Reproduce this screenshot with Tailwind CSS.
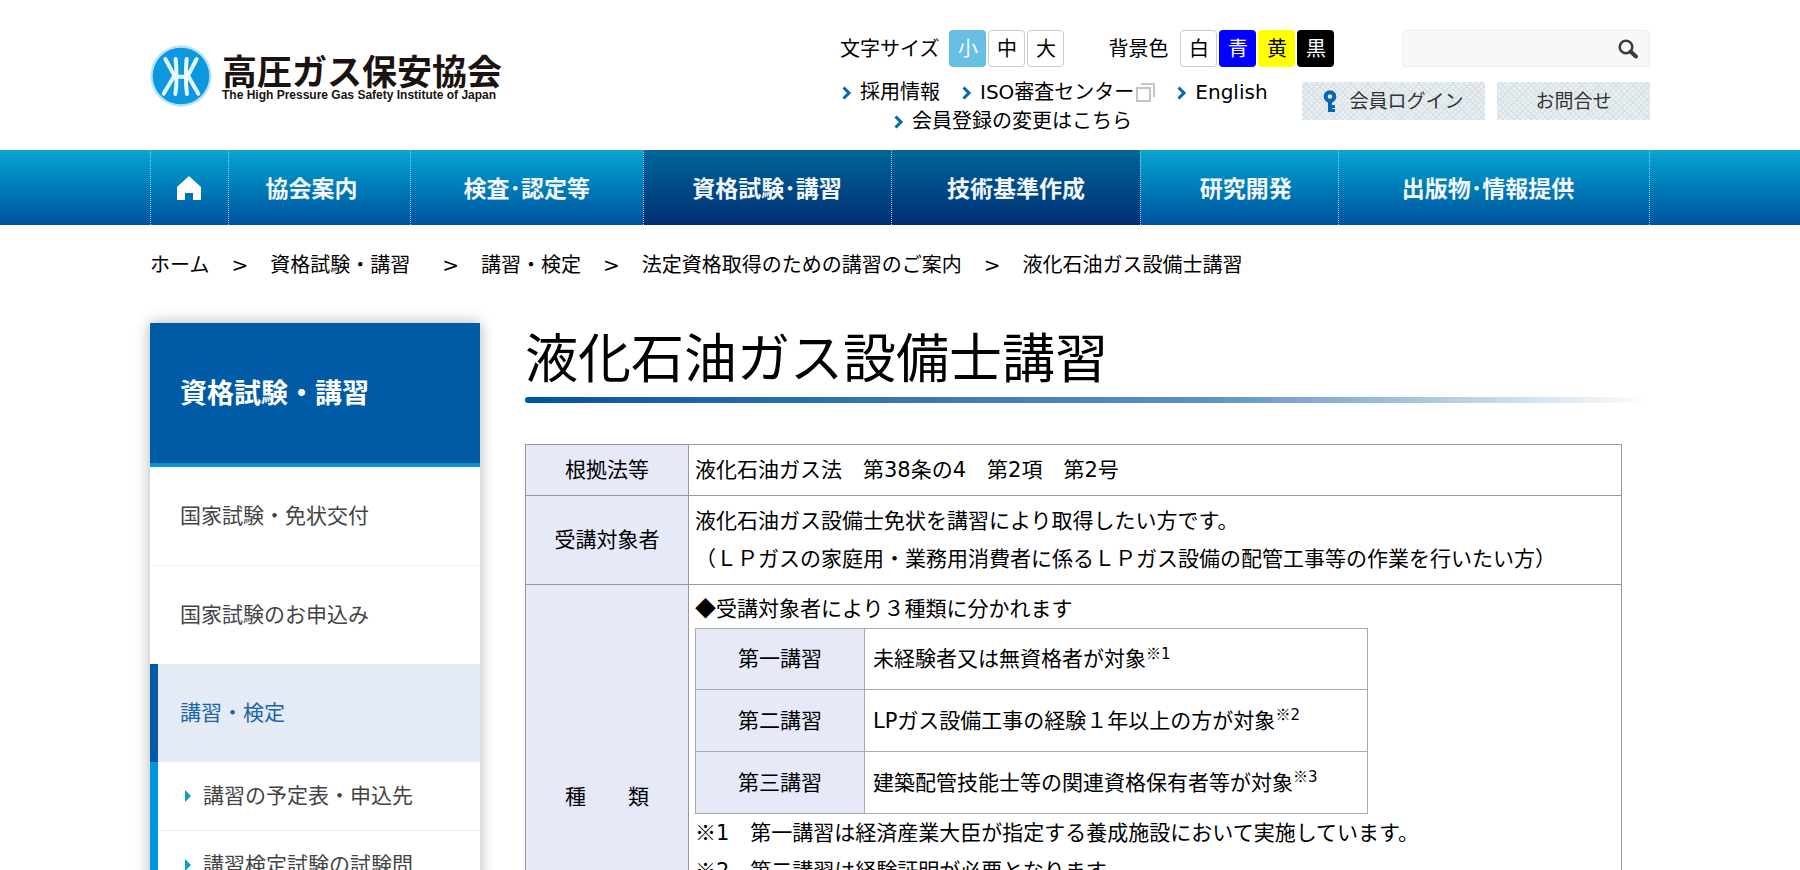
<!DOCTYPE html>
<html lang="ja">
<head>
<meta charset="utf-8">
<meta name="viewport" content="width=device-width, initial-scale=1">
<title>液化石油ガス設備士講習 | 高圧ガス保安協会</title>
<script src="https://cdn.jsdelivr.net/npm/@tailwindcss/browser@4"></script>
</head>
<body class="bg-white text-black font-[Verdana,'DejaVu_Sans','Noto_Sans_CJK_JP',sans-serif] overflow-x-hidden">

<svg class="hidden" aria-hidden="true">
  <symbol id="chevron" viewBox="0 0 10 14"><path d="M1.5 1.5 7 7l-5.500 5.500" fill="none" stroke="#0068ad" stroke-width="3"/></symbol>
  <symbol id="tri" viewBox="0 0 6 12"><path d="M0 0 6 6 0 12z" fill="#0a9fc4"/></symbol>
</svg>

<header class="mx-auto flex max-w-[1500px] min-h-[150px] items-start justify-between pt-[30px]">
  <a href="#" class="mt-[15px] flex items-center gap-2.5">
    <svg class="size-[62px]" viewBox="0 0 186 186" role="img" aria-label="KHK">
      <circle cx="93" cy="93" r="92" fill="#b9e2f6"/>
      <circle cx="93" cy="93" r="85" fill="#0c98e0"/>
      <g fill="none" stroke="#e8f8ff" stroke-width="12" stroke-linecap="round" stroke-linejoin="round">
        <path d="M46 42 73 92 41 146"/>
        <path d="M77 42 79 68V120L76 147"/>
        <path d="M110 42 108 68V120L111 147"/>
        <path d="M140 42 114 92 145 146"/>
        <path d="M73 95H114"/>
      </g>
    </svg>
    <span class="block text-[#1a1311]">
      <span class="block text-[35px] leading-[37px] font-bold font-['Noto_Sans_CJK_JP',sans-serif]">高圧ガス保安協会</span>
      <span class="block text-[12px] leading-[14px] font-bold font-['Liberation_Sans',sans-serif]">The High Pressure Gas Safety Institute of Japan</span>
    </span>
  </a>

  <div class="w-[814px]">
    <div class="flex h-[37px] items-center pl-1 text-[20px]">
      <span>文字サイズ</span>
      <div class="ml-2.5 flex gap-0.5">
        <button class="size-[37px] rounded bg-[#68bfe6] text-white">小</button>
        <button class="size-[37px] rounded border border-[#ccc] bg-white">中</button>
        <button class="size-[37px] rounded border border-[#ccc] bg-white">大</button>
      </div>
      <span class="ml-11">背景色</span>
      <div class="ml-3 flex gap-0.5">
        <button class="size-[37px] rounded border border-[#ccc] bg-white">白</button>
        <button class="size-[37px] rounded bg-[#0000ff] text-white">青</button>
        <button class="size-[37px] rounded bg-[#ffff00]">黄</button>
        <button class="size-[37px] rounded bg-black text-white">黒</button>
      </div>
      <form class="ml-auto flex h-[37px] w-[248px] items-center rounded-sm border border-[#ececec] bg-[#f8f8f8]">
        <input type="search" aria-label="サイト内検索" class="min-w-0 flex-1 bg-transparent px-2 outline-none">
        <button type="button" aria-label="検索" class="mr-[11px]">
          <svg class="size-5" viewBox="0 0 20 20" fill="none" stroke="#3c3c3c"><circle cx="8" cy="8" r="6.300" stroke-width="2.500"/><path d="m12.500 12.500 5.500 5" stroke-width="4" stroke-linecap="round"/></svg>
        </button>
      </form>
    </div>
    <div class="mt-[11px] flex items-start justify-between">
      <ul class="flex w-[450px] flex-wrap pl-1.5 text-[20px] leading-[29px]">
        <li class="mr-[22px]"><a href="#" class="flex items-center gap-2"><svg class="h-3.5 w-2.5"><use href="#chevron"/></svg>採用情報</a></li>
        <li class="mr-[22px]"><a href="#" class="flex items-center gap-2"><svg class="h-3.5 w-2.5"><use href="#chevron"/></svg><span class="flex items-center gap-0.5">ISO審査センター<svg class="size-[19px]" viewBox="0 0 19 19" fill="none" stroke="#c4c4c4" stroke-width="2"><path d="M5 1H18V14M1 5H14V18H1z"/></svg></span></a></li>
        <li><a href="#" class="flex items-center gap-2"><svg class="h-3.5 w-2.5"><use href="#chevron"/></svg>English</a></li>
        <li class="w-full pl-[52px]"><a href="#" class="flex items-center gap-2"><svg class="h-3.5 w-2.5"><use href="#chevron"/></svg>会員登録の変更はこちら</a></li>
      </ul>
      <div class="mt-1 flex w-[348px] gap-3 text-[19px] text-[#333]">
        <a href="#" class="flex h-[38px] w-[183px] items-center justify-center gap-3 bg-[#e9eef2] bg-[repeating-linear-gradient(45deg,#d6e1e5_0_1px,transparent_1px_4px),repeating-linear-gradient(-45deg,#d6e1e5_0_1px,transparent_1px_4px)]">
          <svg class="h-[22px] w-3.5" viewBox="0 0 14 22"><circle cx="7" cy="6.500" r="4.300" fill="none" stroke="#0a66b0" stroke-width="4"/><path d="M5 10H9V15H12V18H9.500V19H12V22H5z" fill="#0a66b0"/></svg>会員ログイン</a>
        <a href="#" class="flex h-[38px] flex-1 items-center justify-center bg-[#e9eef2] bg-[repeating-linear-gradient(45deg,#d6e1e5_0_1px,transparent_1px_4px),repeating-linear-gradient(-45deg,#d6e1e5_0_1px,transparent_1px_4px)]">お問合せ</a>
      </div>
    </div>
  </div>
</header>

<nav class="bg-linear-to-b from-[#0da5d1] to-[#00539f]">
  <ul class="mx-auto grid h-[75px] max-w-[1500px] grid-cols-[78fr_182fr_233fr_248fr_250fr_198fr_311fr] border-r border-dotted border-[#86d4f7] text-[23px] font-bold text-[#f2f8fd] *:border-l *:border-dotted *:border-[#86d4f7] font-['Noto_Sans_CJK_JP',sans-serif]">
    <li><a href="#" aria-label="ホーム" class="flex h-full items-center justify-center"><svg class="size-6" viewBox="0 0 24 24" fill="#fff"><path d="M12 0 24 11V24H16V17H8V24H0V11z"/></svg></a></li>
    <li><a href="#" class="flex h-full items-center justify-center pr-4">協会案内</a></li>
    <li><a href="#" class="flex h-full items-center justify-center">検査･認定等</a></li>
    <li class="bg-linear-to-b from-[#00669a] to-[#002e73]"><a href="#" class="flex h-full items-center justify-center">資格試験･講習</a></li>
    <li class="bg-linear-to-b from-[#00669a] to-[#002e73]"><a href="#" class="flex h-full items-center justify-center">技術基準作成</a></li>
    <li><a href="#" class="flex h-full items-center justify-center pl-3">研究開発</a></li>
    <li><a href="#" class="flex h-full items-center justify-center pr-3">出版物･情報提供</a></li>
  </ul>
</nav>

<div class="mx-auto max-w-[1500px]">
  <ol class="flex gap-[22px] pt-[25px] text-[20px] leading-[30px]">
    <li><a href="#">ホーム</a></li>
    <li>&gt;</li>
    <li class="mr-2.5"><a href="#">資格試験・講習</a></li>
    <li>&gt;</li>
    <li><a href="#">講習・検定</a></li>
    <li>&gt;</li>
    <li><a href="#">法定資格取得のための講習のご案内</a></li>
    <li>&gt;</li>
    <li>液化石油ガス設備士講習</li>
  </ol>

  <div class="mt-[43px] flex items-start gap-[45px]">
    <aside class="w-[330px] shrink-0 bg-white text-[21px] leading-[30px] text-[#444] shadow-[0_0_14px_rgba(0,0,0,0.3)]">
      <h2 class="flex h-36 items-center border-b-4 border-[#0c93d6] bg-[#005ba6] px-[30px] pt-0.5 text-[27px] font-bold text-white">資格試験・講習</h2>
      <ul>
        <li class="border-b border-[#eee]"><a href="#" class="block px-[30px] py-[34px]">国家試験・免状交付</a></li>
        <li><a href="#" class="block px-[30px] py-[34px]">国家試験のお申込み</a></li>
        <li>
          <a href="#" class="block border-l-8 border-[#005ba6] bg-[#e4ebf4] px-[22px] py-[34px] text-[#1a64a8]">講習・検定</a>
          <ul class="border-l-8 border-[#0098dc]">
            <li class="border-b border-[#eee]"><a href="#" class="flex gap-3 py-[19px] pr-12 pl-[27px]"><svg class="mt-[9px] h-3 w-1.5 shrink-0"><use href="#tri"/></svg>講習の予定表・申込先</a></li>
            <li class="border-b border-[#eee]"><a href="#" class="flex gap-3 py-[19px] pr-12 pl-[27px]"><svg class="mt-[9px] h-3 w-1.5 shrink-0"><use href="#tri"/></svg>講習検定試験の試験問題</a></li>
          </ul>
        </li>
      </ul>
    </aside>

    <main class="min-w-0 flex-1">
      <h1 class="text-[53px] leading-[74px]">液化石油ガス設備士講習</h1>
      <div class="h-1.5 rounded-l-full bg-linear-to-r from-[#00539f] via-[#5b90c2] via-60% to-white"></div>
      <table class="mt-[41px] w-[1097px] max-w-full table-fixed border-collapse text-[21px] leading-[38px]">
        <colgroup><col class="w-[163px]"><col></colgroup>
        <tbody>
          <tr>
            <th class="border border-[#999] bg-[#e5e9f8] p-1.5 font-normal">根拠法等</th>
            <td class="border border-[#999] p-1.5">液化石油ガス法　第38条の4　第2項　第2号</td>
          </tr>
          <tr>
            <th class="border border-[#999] bg-[#e5e9f8] p-1.5 font-normal">受講対象者</th>
            <td class="border border-[#999] p-1.5">液化石油ガス設備士免状を講習により取得したい方です。<br>（ＬＰガスの家庭用・業務用消費者に係るＬＰガス設備の配管工事等の作業を行いたい方）</td>
          </tr>
          <tr>
            <th class="border border-[#999] bg-[#e5e9f8] p-1.5 font-normal">種　　類</th>
            <td class="border border-[#999] px-1.5 py-[5px]">
              <p><span class="leading-none font-['Noto_Sans_CJK_JP',sans-serif]">◆</span>受講対象者により３種類に分かれます</p>
              <table class="w-[673px] max-w-full table-fixed border-collapse">
                <colgroup><col class="w-[169px]"><col></colgroup>
                <tbody>
                  <tr class="h-[61px]"><th class="border border-[#aaa] bg-[#e5e9f8] font-normal">第一講習</th><td class="border border-[#aaa] px-2">未経験者又は無資格者が対象<sup class="text-[15px]"><span class="font-['Noto_Sans_CJK_JP',sans-serif]">※</span>1</sup></td></tr>
                  <tr class="h-[62px]"><th class="border border-[#aaa] bg-[#e5e9f8] font-normal">第二講習</th><td class="border border-[#aaa] px-2">LPガス設備工事の経験１年以上の方が対象<sup class="text-[15px]"><span class="font-['Noto_Sans_CJK_JP',sans-serif]">※</span>2</sup></td></tr>
                  <tr class="h-[62px]"><th class="border border-[#aaa] bg-[#e5e9f8] font-normal">第三講習</th><td class="border border-[#aaa] px-2">建築配管技能士等の関連資格保有者等が対象<sup class="text-[15px]"><span class="font-['Noto_Sans_CJK_JP',sans-serif]">※</span>3</sup></td></tr>
                </tbody>
              </table>
              <p><span class="leading-none font-['Noto_Sans_CJK_JP',sans-serif]">※</span>1　第一講習は経済産業大臣が指定する養成施設において実施しています。</p>
              <p class="min-h-[152px]"><span class="leading-none font-['Noto_Sans_CJK_JP',sans-serif]">※</span>2　第二講習は経験証明が必要となります。</p>
            </td>
          </tr>
        </tbody>
      </table>
    </main>
  </div>
</div>
</body>
</html>
